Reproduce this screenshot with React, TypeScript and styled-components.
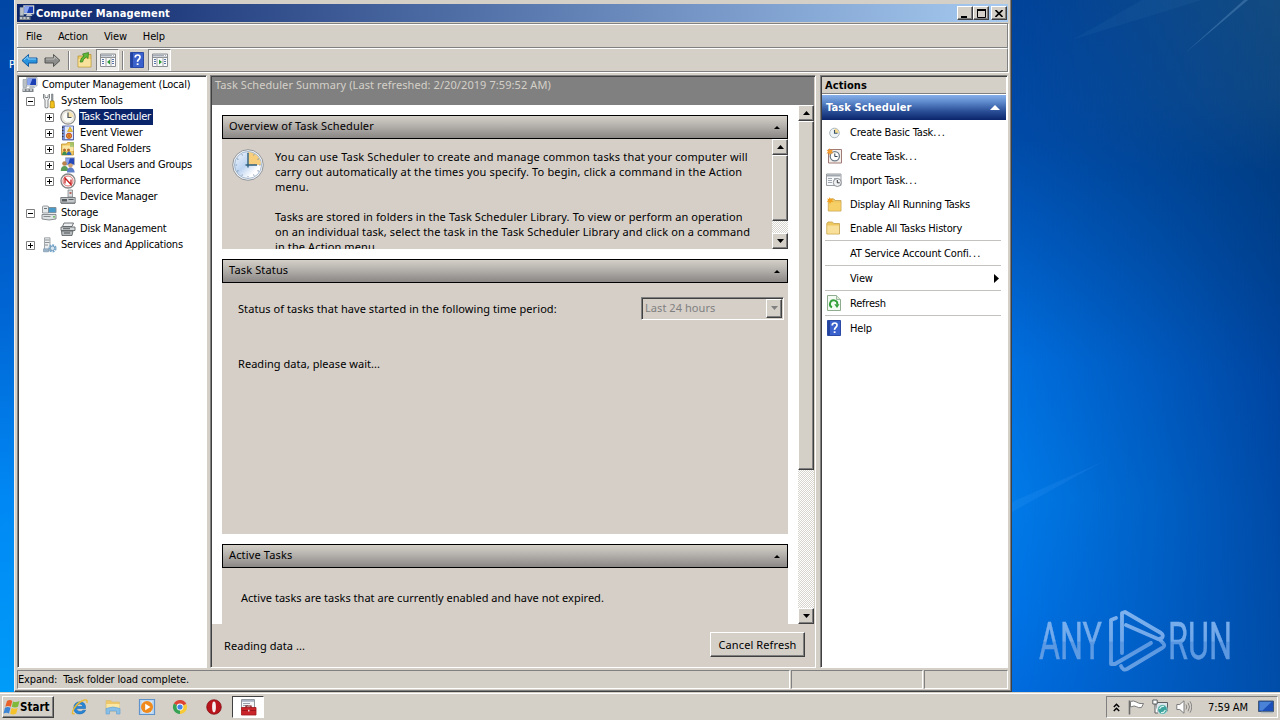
import React, { ReactNode } from "react";
import styled, { createGlobalStyle, css } from "styled-components";

const UI_FONT = `"DejaVu Sans Condensed", "DejaVu Sans", sans-serif`;
const CONTENT_FONT = `"Noto Sans", "Open Sans", sans-serif`;

const FACE = "#d4d0c8";
const SHADOW = "#808080";
const DARK = "#404040";

const raised = css`
    background: ${FACE};
    border: 1px solid;
    border-color: #ffffff ${DARK} ${DARK} #ffffff;
    box-shadow: inset -1px -1px 0 ${SHADOW};
`;

const GlobalStyle = createGlobalStyle`
    * {
        box-sizing: border-box;
    }
    body {
        margin: 0;
        overflow: hidden;
        font-family: ${UI_FONT};
        font-size: 11px;
        color: #000000;
    }
    svg {
        display: block;
        flex: none;
    }
`;

const Screen = styled.div`
    width: 1280px;
    height: 720px;
    display: flex;
    flex-direction: column;
    overflow: hidden;
`;

const Desktop = styled.div`
    position: relative;
    flex: 1;
    min-height: 0;
    padding-left: 14px;
    background: linear-gradient(180deg, #00439a 0%, #004ba8 20%, #005dc4 37%, #006fdf 52%, #007be9 72%, #0074e6 88%, #006cdf 100%);
    &:before {
        content: "";
        position: absolute;
        inset: 0;
        background: linear-gradient(180deg, #134b80 0%, #0d4682 14%, #003d84 25%, #003f8c 36%, #0045a0 55%, #004aa6 75%, #004da8 100%);
        mask-image: linear-gradient(90deg, transparent 1012px, rgba(0, 0, 0, 0.5) 1150px, #000000 1280px);
    }
    &:after {
        content: "";
        position: absolute;
        left: 0;
        top: 0;
        width: 14px;
        height: 100%;
        background: linear-gradient(180deg, #0046a4 0%, #004cb4 14%, #0066d4 45%, #0088f4 72%, #009cf9 100%);
    }
`;

const Rays = styled.svg`
    position: absolute;
    left: 1012px;
    top: 0;
`;

const Watermark = styled.svg`
    position: absolute;
    left: 1036px;
    top: 608px;
    opacity: 0.9;
`;

const IconCaption = styled.span<{ $top: number }>`
    position: absolute;
    z-index: 1;
    left: 9px;
    top: ${props => props.$top}px;
    width: 5px;
    overflow: hidden;
    color: #ffffff;
    line-height: 12px;
`;

const Window = styled.div`
    position: relative;
    z-index: 2;
    width: 998px;
    height: 692px;
    padding: 4px 3px 2px 2px;
    display: flex;
    flex-direction: column;
    background: ${FACE};
    border-left: 1px solid #f2f0ec;
    border-right: 1px solid ${DARK};
    border-bottom: 1px solid ${DARK};
    box-shadow: inset -1px -1px 0 ${SHADOW};
`;

const TitleBar = styled.div`
    height: 18px;
    padding: 0 1px 0 2px;
    display: flex;
    align-items: center;
    gap: 1px;
    background: linear-gradient(90deg, #0a246a, #a6caf0);
`;

const Title = styled.h1`
    flex: 1;
    margin: 0;
    font-size: 11px;
    font-weight: 700;
    letter-spacing: 0.15px;
    color: #ffffff;
`;

const CaptionButton = styled.div<{ $gap?: boolean }>`
    ${raised}
    width: 16px;
    height: 14px;
    margin-left: ${props => props.$gap ? 1 : -1}px;
    display: flex;
    align-items: center;
    justify-content: center;
`;

const Band = styled.div<{ $first?: boolean }>`
    height: ${props => props.$first ? 25 : 24}px;
    margin-top: ${props => props.$first ? 1 : 0}px;
    padding-left: 1px;
    display: flex;
    align-items: center;
    border: 1px solid ${SHADOW};
    border-left: 0;
    border-top-color: ${props => props.$first ? SHADOW : "#ffffff"};
    box-shadow: inset 1px 0 0 #ffffff, inset 0 1px 0 ${props => props.$first ? "#ffffff" : "transparent"}, 1px 1px 0 #ffffff;
`;

const MenuItem = styled.span`
    margin-left: 8px;
    margin-right: 8px;
    padding-top: 1px;
    letter-spacing: -0.15px;
`;

const ToolButton = styled.div<{ $pressed?: boolean }>`
    width: 23px;
    height: 22px;
    display: flex;
    align-items: center;
    justify-content: center;
    ${props => props.$pressed && css`
        background: #f0eeea;
        border: 1px solid;
        border-color: ${SHADOW} #ffffff #ffffff ${SHADOW};
    `}
`;

const ToolSeparator = styled.div<{ $tight?: boolean }>`
    width: 2px;
    height: 19px;
    margin: ${props => props.$tight ? "0 1px 0 3px" : "0 3px 0 4px"};
    border-left: 1px solid ${SHADOW};
    border-right: 1px solid #ffffff;
`;

const Panes = styled.div`
    flex: 1;
    min-height: 0;
    margin-top: 3px;
    display: flex;
`;

const Pane = styled.div<{ $width: number; $gap?: number; $fill?: string }>`
    width: ${props => props.$width}px;
    margin-right: ${props => props.$gap || 0}px;
    flex: none;
    display: flex;
    flex-direction: column;
    overflow: hidden;
    background: ${props => props.$fill || "#ffffff"};
    border: 1px solid;
    border-color: ${SHADOW} #ffffff #ffffff ${SHADOW};
    box-shadow: inset 1px 1px 0 ${DARK};
    padding: 1px 1px 0 1px;
`;

const TreeRow = styled.div<{ $level: number }>`
    height: 16px;
    padding-left: ${props => [3, 7, 26][props.$level]}px;
    display: flex;
    align-items: center;
`;

const Expander = styled.span<{ $empty?: boolean }>`
    width: 9px;
    height: 9px;
    margin-right: 6px;
    flex: none;
    visibility: ${props => props.$empty ? "hidden" : "visible"};
`;

const TreeLabel = styled.span<{ $selected?: boolean }>`
    height: 16px;
    margin-left: 3px;
    padding: 0 2px 0 1px;
    line-height: 16px;
    white-space: nowrap;
    letter-spacing: -0.21px;
    ${props => props.$selected && css`
        color: #ffffff;
        background: #0a246a;
    `}
`;

const SummaryHeader = styled.div`
    height: 28px;
    flex: none;
    padding: 0 3px;
    font-family: ${CONTENT_FONT};
    letter-spacing: 0.08px;
    line-height: 16px;
    color: ${FACE};
    background: ${SHADOW};
`;

const ScrollArea = styled.div`
    height: 519px;
    flex: none;
    display: flex;
    overflow: hidden;
    background: #ffffff;
`;

const Sections = styled.div`
    flex: 1;
    padding: 10px 10px 0 10px;
    font-family: ${CONTENT_FONT};
`;

const Section = styled.section<{ $height: number }>`
    height: ${props => props.$height}px;
    margin-bottom: 10px;
    display: flex;
    flex-direction: column;
    background: #d5cfc8;
`;

const SectionHeader = styled.header`
    height: 24px;
    flex: none;
    padding: 0 7px 0 6px;
    display: flex;
    align-items: center;
    justify-content: space-between;
    letter-spacing: 0.15px;
    line-height: 20px;
    border: 1px solid #000000;
    background: linear-gradient(180deg, #d4d0c8 0%, #b4b0ac 45%, #8b8785 100%);
    span {
        padding-bottom: 2px;
    }
`;

const Overview = styled.div`
    flex: 1;
    min-height: 0;
    display: flex;
    overflow: hidden;
`;

const OverviewIcon = styled.div`
    width: 53px;
    padding: 10px 0 0 10px;
`;

const OverviewText = styled.div`
    flex: 1;
    padding-top: 10px;
`;

const Paragraph = styled.p<{ $spacing: number }>`
    margin: 0 0 15px;
    line-height: 15px;
    white-space: pre;
    letter-spacing: ${props => props.$spacing}px;
`;

const ScrollBar = styled.div`
    width: 16px;
    flex: none;
    display: flex;
    flex-direction: column;
    background: repeating-conic-gradient(#ffffff 0% 25%, #d8d5ce 0% 50%) 0 0 / 2px 2px;
`;

const ScrollButton = styled.div`
    ${raised}
    height: 16px;
    flex: none;
    display: flex;
    align-items: center;
    justify-content: center;
`;

const Thumb = styled.div<{ $height: number }>`
    ${raised}
    height: ${props => props.$height}px;
    margin-bottom: auto;
`;

const StatusBody = styled.div`
    padding: 13px 4px 0 16px;
    display: flex;
    flex-direction: column;
`;

const PeriodRow = styled.div`
    height: 24px;
    display: flex;
    align-items: center;
    justify-content: space-between;
    letter-spacing: 0.065px;
`;

const Select = styled.div`
    width: 143px;
    height: 23px;
    padding: 1px 1px 1px 3px;
    display: flex;
    align-items: center;
    justify-content: space-between;
    color: ${SHADOW};
    border: 1px solid;
    border-color: ${SHADOW} #ffffff #ffffff ${SHADOW};
    box-shadow: inset 1px 1px 0 ${DARK};
    span {
        padding-bottom: 1px;
    }
`;

const DropButton = styled.div`
    ${raised}
    width: 16px;
    height: 19px;
    display: flex;
    align-items: center;
    justify-content: center;
`;

const Waiting = styled.div`
    margin-top: 36px;
    letter-spacing: 0.04px;
    line-height: 16px;
`;

const ActiveBody = styled.div`
    padding: 22px 0 0 19px;
    line-height: 16px;
    letter-spacing: 0.02px;
`;

const SummaryFooter = styled.div`
    flex: 1;
    padding: 0 9px 0 12px;
    display: flex;
    align-items: center;
    justify-content: space-between;
    font-family: ${CONTENT_FONT};
    letter-spacing: 0.06px;
    background: #d5cfc8;
`;

const PushButton = styled.button`
    ${raised}
    width: 95px;
    height: 25px;
    margin-bottom: 2px;
    padding: 0 0 1px;
    font-family: ${CONTENT_FONT};
    font-size: 11px;
    letter-spacing: 0.1px;
    color: #000000;
`;

const ActionsTitle = styled.div`
    height: 17px;
    padding-left: 3px;
    line-height: 17px;
    font-weight: 700;
    letter-spacing: 0.08px;
    background: ${FACE};
    border-bottom: 1px solid ${SHADOW};
`;

const ActionsGroup = styled.div`
    height: 25px;
    margin-top: 1px;
    padding: 0 6px 0 4px;
    display: flex;
    align-items: center;
    justify-content: space-between;
    font-weight: 700;
    letter-spacing: 0.13px;
    color: #ffffff;
    background: linear-gradient(180deg, #86b0ea 0%, #5b86c9 30%, #2a4f97 65%, #0a246a 100%);
`;

const ActionRow = styled.div`
    height: 24px;
    padding: 0 7px 0 4px;
    display: flex;
    align-items: center;
    letter-spacing: -0.2px;
    > svg {
        margin-left: auto;
    }
`;

const ActionIcon = styled.span`
    width: 24px;
    height: 16px;
`;

const Dots = styled.span`
    letter-spacing: 1.2px;
`;

const ActionSeparator = styled.div`
    height: 1px;
    margin: 0 5px 0 3px;
    background: #c4c2be;
`;

const StatusBar = styled.div`
    height: 19px;
    margin-top: 2px;
    display: flex;
    gap: 1px;
`;

const StatusCell = styled.div<{ $width: number }>`
    width: ${props => props.$width}px;
    line-height: 17px;
    white-space: pre;
    letter-spacing: -0.16px;
    border: 1px solid;
    border-color: ${SHADOW} #ffffff #ffffff ${SHADOW};
`;

const Taskbar = styled.div`
    height: 28px;
    flex: none;
    padding: 4px 2px 2px 2px;
    display: flex;
    align-items: stretch;
    background: ${FACE};
    box-shadow: inset 0 1px 0 ${FACE}, inset 0 2px 0 #ffffff;
`;

const StartButton = styled.div`
    ${raised}
    width: 52px;
    display: flex;
    align-items: center;
    font-size: 11.5px;
    font-weight: 700;
`;

const QuickLaunch = styled.div`
    margin-left: 9px;
    display: flex;
    align-items: center;
`;

const QuickItem = styled.div<{ $active?: boolean }>`
    width: 33.5px;
    height: 22px;
    display: flex;
    align-items: center;
    justify-content: center;
    ${props => props.$active && css`
        width: 32px;
        margin-left: 1px;
        background: #ffffff;
        border: 1px solid;
        border-color: ${DARK} #ffffff #ffffff ${DARK};
    `}
`;

const Tray = styled.div`
    width: 172px;
    margin-left: auto;
    padding: 0 1px 0 6px;
    display: flex;
    align-items: center;
    gap: 8px;
    border: 1px solid;
    border-color: ${SHADOW} #ffffff #ffffff ${SHADOW};
`;

const Clock = styled.span`
    margin: 0 2px 0 8px;
    letter-spacing: -0.1px;
    white-space: nowrap;
`;

interface IconProps {
    size?: number;
    children?: ReactNode;
}

const Icon16 = ({ size = 16, children }: IconProps) => (
    <svg width={size} height={size} viewBox="0 0 16 16">{children}</svg>
);

const Triangle = ({ dir, width, color = "#000000" }: { dir: "up" | "down" | "right"; width: number; color?: string }) => {
    const half = Math.ceil(width / 2);
    if (dir === "right") {
        return <svg width={half} height={width}><path d={`M0 0L${half} ${width / 2}L0 ${width}z`} fill={color} /></svg>;
    }
    const d = dir === "up" ? `M0 ${half}L${width / 2} 0L${width} ${half}z` : `M0 0L${width / 2} ${half}L${width} 0z`;
    return <svg width={width} height={half}><path d={d} fill={color} /></svg>;
};

const ComputerIcon = () => (
    <Icon16>
        <path d="M1 2.500h3.500v8H1z" fill="#b9c0c6" stroke="#8f979d" strokeWidth=".6" />
        <path d="M4.500.5h10.500v8.500H4.500z" fill="#e8ecef" stroke="#9aa2a9" strokeWidth=".7" />
        <path d="M5.500 1.500h8.500V8H5.500z" fill="#1d3fb4" />
        <path d="M5.500 1.500h5L8 8H5.500z" fill="#8aa5f0" />
        <path d="M8 9h4l1.500 2H7z" fill="#b9c0c6" />
        <path d="M.5 11.500h11V15H.5z" fill="#7b8388" />
        <path d="M1 12.300h2v1.500H1zM4.500 12.300h2v1.500h-2zM8 12.300h2v1.500H8z" fill="#d9dde0" />
    </Icon16>
);

const ToolsIcon = () => (
    <Icon16>
        <path d="M2.500 1v4l1.500 2v7.500q1.500 1 3 0V7l1.500-2V1L7 2.500V4.500H4V2.500z" fill="#f1f1f1" stroke="#73787c" strokeWidth=".9" />
        <path d="M10.500 1H12v7h-1.500z" fill="#9aa0a5" stroke="#5f6468" strokeWidth=".5" />
        <path d="M9.500 8H13l.5 6.500q-2.200 1.200-4.500 0z" fill="#f2c21c" stroke="#a87b00" strokeWidth=".7" />
    </Icon16>
);

const ClockIcon = () => (
    <Icon16>
        <circle cx="8" cy="8" r="7.200" fill="#f2f2ee" stroke="#8b8b8b" strokeWidth="1.200" />
        <circle cx="8" cy="8" r="5.500" fill="#fbfbf7" stroke="#d5cfbf" strokeWidth=".7" />
        <path d="M8 8V2.800A5.200 5.200 0 0 1 13.200 8z" fill="#f7e3ae" />
        <path d="M8 3.500V8.500H11.500" fill="none" stroke="#4b5057" strokeWidth="1.200" />
    </Icon16>
);

const BigClockIcon = () => (
    <svg width="32" height="32" viewBox="0 0 32 32">
        <defs>
            <linearGradient id="clockFace" x1="0" y1="0" x2="1" y2="1">
                <stop offset="0" stopColor="#f4f8fd" />
                <stop offset=".45" stopColor="#bcd3f0" />
                <stop offset=".75" stopColor="#ffffff" />
            </linearGradient>
        </defs>
        <circle cx="16" cy="16" r="15.300" fill="#f4f6f8" stroke="#8f9499" strokeWidth="1" />
        <circle cx="16" cy="16" r="13.500" fill="url(#clockFace)" stroke="#8da7c4" strokeWidth=".8" />
        <path d="M16 16V3A13 13 0 0 1 29 16z" fill="#f7cf7c" />
        {Array.from(Array(12).keys()).map(i => (
            <path key={i} d="M16 3.500v1.500" stroke="#8399b2" strokeWidth=".9" transform={`rotate(${i * 30} 16 16)`} />
        ))}
        <path d="M16 4V18.500M13.500 16H25" stroke="#2d5f7f" strokeWidth="1.400" />
    </svg>
);

const EventIcon = () => (
    <Icon16>
        <path d="M2.500 1h11v14h-11z" fill="#7b93d6" stroke="#3d4f93" strokeWidth=".8" />
        <path d="M5 1.500h8V14H5z" fill="#dfe6fa" />
        <path d="M2 2h1.500v1H2zM2 5h1.500v1H2zM2 8h1.500v1H2zM2 11h1.500v1H2z" fill="#3a3a3a" />
        <circle cx="9" cy="10.800" r="2.600" fill="#e0a020" stroke="#c23a22" strokeWidth=".9" />
        <path d="M10 2l2.500 4.500h-5z" fill="#f5c62b" stroke="#b98a00" strokeWidth=".5" />
        <path d="M8.500 9.500h1v2.500h-1z" fill="#c23a22" />
    </Icon16>
);

const SharedIcon = () => (
    <Icon16>
        <path d="M1.500 3h5l1-1.500h6V14h-12z" fill="#f0c75c" stroke="#bf9232" strokeWidth=".8" />
        <path d="M2.500 4.500h11V10h-11z" fill="#fae7a6" />
        <path d="M10 1h4v5h-4z" fill="#8fc26a" opacity=".7" />
        <circle cx="4.500" cy="9" r="1.500" fill="#b96f2a" />
        <circle cx="8.500" cy="9" r="1.500" fill="#b96f2a" />
        <path d="M2 14q.5-3.500 2.500-3.500T7 14z" fill="#3e8f4c" />
        <path d="M6.500 14q.5-3.500 2.500-3.500t2.500 3.500z" fill="#2e63b8" />
    </Icon16>
);

const UsersIcon = () => (
    <Icon16>
        <path d="M5.500.8h9v7h-9z" fill="#2548bb" stroke="#a9b1bd" strokeWidth=".9" />
        <path d="M6 1.300h4L8 7.300H6z" fill="#8ba6ef" />
        <circle cx="4.500" cy="6.500" r="2.300" fill="#b9834c" />
        <path d="M.8 14q0-5 3.700-5t3.700 5z" fill="#5c9c5a" />
        <circle cx="10.500" cy="8.500" r="2.200" fill="#d2a373" />
        <path d="M7 15.500q0-5 3.500-5t4.200 5z" fill="#5e7fc9" />
    </Icon16>
);

const PerformanceIcon = () => (
    <Icon16>
        <circle cx="8" cy="8" r="7" fill="#fafafa" stroke="#858585" strokeWidth="1.300" />
        <circle cx="8" cy="8" r="5" fill="#ffffff" stroke="#e07070" strokeWidth="1" />
        <path d="M5 10.500V5l6 6.500V6.500" fill="none" stroke="#c81e1e" strokeWidth="1.300" />
    </Icon16>
);

const DeviceIcon = () => (
    <Icon16>
        <path d="M8 1h4.500v7H8z" fill="#d8dcdf" stroke="#72787d" strokeWidth=".7" />
        <path d="M9.500 3h2v2h-2z" fill="#b9695f" />
        <path d="M.8 8.500h14.400V14H.8z" fill="#c3c7ca" stroke="#60666a" strokeWidth=".8" />
        <path d="M2 10h5v2.500H2zM8.500 10h5v1h-5z" fill="#575d61" />
        <path d="M1 14h14v1H1z" fill="#7c8286" />
    </Icon16>
);

const StorageIcon = () => (
    <Icon16>
        <path d="M2.500 1h4q1 0 1 1v6h-6V2q0-1 1-1z" fill="#e6e9ea" stroke="#7d8488" strokeWidth=".8" />
        <path d="M7.500 2.500h7.500v5.200H7.500z" fill="#4a9ac9" stroke="#80898f" strokeWidth=".9" />
        <path d="M3 3.500h3" stroke="#6d7478" />
        <path d="M1 9.500h14V14q-7 2-14 0z" fill="#dfe2e3" stroke="#6f767a" strokeWidth=".8" />
        <path d="M2.500 11.500h7" stroke="#868d91" />
        <circle cx="13" cy="11.800" r=".9" fill="#4eb53c" />
    </Icon16>
);

const DiskIcon = () => (
    <Icon16>
        <path d="M4 2h9.500l-1.500 3.500H2.500z" fill="#eceeef" stroke="#62686c" strokeWidth=".9" />
        <path d="M1 6h14v3.500H1z" fill="#d5d8da" stroke="#53595c" strokeWidth=".8" />
        <path d="M1.500 10H13l-1 4.500H2z" fill="#b8bcbf" stroke="#53595c" strokeWidth=".8" />
        <path d="M3 7.800h7M4 12h6" stroke="#4b5154" strokeWidth="1.100" />
    </Icon16>
);

const ServicesIcon = () => (
    <Icon16>
        <path d="M3.500.8h5.500v12.500H3.500z" fill="#eceeef" stroke="#8c9296" strokeWidth=".8" />
        <path d="M4 3h4.500M4 5.500h4.500M4 8h3" stroke="#81878b" strokeWidth=".9" />
        <circle cx="11.500" cy="11.300" r="3" fill="none" stroke="#76a6c9" strokeWidth="2.300" strokeDasharray="1.800 .9" />
        <circle cx="11.500" cy="11.300" r="2.200" fill="#d7e6f1" stroke="#6391b3" strokeWidth=".8" />
        <path d="M2.500 11.800h5v3h-5z" fill="#9bb4c9" stroke="#7893a9" strokeWidth=".6" />
    </Icon16>
);

const ArrowIcon = ({ back }: { back?: boolean }) => (
    <svg width="17" height="16" viewBox="0 0 17 16">
        <path
            d={back ? "M1 8.500L7.500 2.500v3.500H16v5H7.500V14.500z" : "M16 8.500L9.500 2.500v3.500H1v5h8.500V14.500z"}
            fill={back ? "#2a93dd" : "#8d8d8b"}
            stroke={back ? "#145b9e" : "#555553"}
            strokeWidth="1"
            strokeLinejoin="round"
        />
        <path d={back ? "M3 8L7 4.500v2.500h8" : "M2 7h8.300V4.500l3 3"} fill="none" stroke={back ? "#8fd3fa" : "#bdbdbb"} strokeWidth="1" />
    </svg>
);

const UpFolderIcon = () => (
    <Icon16>
        <path d="M1 4h5l1.500-1.500H14V15H1z" fill="#f1d06c" stroke="#b99336" strokeWidth=".8" />
        <path d="M1.500 7h12v7.500h-12z" fill="#f8e19a" />
        <path d="M3 10q1-5 4-6L5.500 2l6-1.500-.5 6-1.800-1.500Q6 7 5.500 10z" fill="#5fb83a" stroke="#2f7d18" strokeWidth=".7" />
    </Icon16>
);

const PanelIcon = ({ right }: { right?: boolean }) => (
    <Icon16>
        <path d="M.5 2h15v12.500H.5z" fill="#fafafa" stroke="#8a8e92" strokeWidth="1" />
        <path d="M1 2.500h14v2H1z" fill="#a6adb6" />
        <path d="M12 3h1v1h-1zM14 3h1v1h-1z" fill="#ffffff" />
        <path d="M1 5.500h14" stroke="#8a8e92" />
        <path d={right ? "M11 5v9.500M5 5v9.500" : "M6 5v9.500M11 5v9.500"} stroke="#a0a4a8" />
        <path d="M2 7.500h2M2 9.500h2M2 11.500h2M12 7.500h2M12 9.500h2M12 11.500h2" stroke="#5a76a8" />
        <path d={right ? "M7 7.500v5L10 10z" : "M10 7.500v5L7 10z"} fill="#2f9b34" />
    </Icon16>
);

const HelpIcon = () => (
    <Icon16>
        <path d="M1.500.5h13v15h-13z" fill="#3b62cc" stroke="#2a4aa6" strokeWidth="1" />
        <path d="M2 1h2v14H2z" fill="#24439f" />
        <path d="M6.200 5.500Q6.200 3 8.700 3T11 5.200Q11 6.500 9.700 7.500T8.600 9.800" fill="none" stroke="#ffffff" strokeWidth="1.700" />
        <path d="M7.700 11.300h1.800V13H7.700z" fill="#ffffff" />
    </Icon16>
);

const SmallClockIcon = () => (
    <Icon16>
        <circle cx="8.500" cy="9" r="4.800" fill="#eef3f6" stroke="#a9b7c0" strokeWidth="1" />
        <path d="M8.500 9V4.700a4.300 4.300 0 0 1 4.300 4.300z" fill="#f5d98e" />
        <path d="M8.500 6v3.300h3" fill="none" stroke="#36546b" strokeWidth="1.100" />
    </Icon16>
);

const CreateTaskIcon = () => (
    <Icon16>
        <path d="M2.500 1.500h13v13.500h-13z" fill="#f4efec" stroke="#a07a74" strokeWidth="1" />
        <circle cx="8.800" cy="8.300" r="4.600" fill="#ffffff" stroke="#6d7c86" strokeWidth="1.300" />
        <path d="M8.800 5.500v3h2.700" fill="none" stroke="#33424c" strokeWidth="1" />
        <path d="M3.500 0l1 2.300L7 1.500 5.800 3.800 7.500 5.500 5 5.300 3.800 7.500 3 5.200.3 5.500 2 3.700.5 1.700l2.300.5z" fill="#f29a2e" />
    </Icon16>
);

const ImportIcon = () => (
    <Icon16>
        <path d="M.5 2h14.500v11.500H.5z" fill="#f7f8f9" stroke="#9a9ea2" strokeWidth="1" />
        <path d="M1 2.500h13.500v2H1z" fill="#a0a7ae" />
        <path d="M2 6.500h4M2 8.500h4M2 10.500h4M8 6.500h4" stroke="#a0a7ae" />
        <circle cx="11.300" cy="10.500" r="4" fill="#f1f2f3" stroke="#8b9095" strokeWidth="1" />
        <path d="M11.300 8v2.800h2.400" fill="none" stroke="#34383c" />
    </Icon16>
);

const FolderIcon = ({ spark }: { spark?: boolean }) => (
    <Icon16>
        <g transform={spark ? "translate(1.500 1)" : ""}>
            <path d="M.8 3.500L2 2h4.500l1 1.500h6V14H.8z" fill="#eec75e" stroke="#c9a85a" strokeWidth=".9" />
            <path d="M1.300 5.500h11.700v8H1.300z" fill={spark ? "#f6cf66" : "#f8e09a"} />
        </g>
        {spark && <path d="M3.500 1l1 2 2.500-.7-1 2.200L7.500 6 5 6l-1 2.200-.8-2.400L.8 6l1.500-1.700L1 2.500l2 .5z" fill="#f2a01e" />}
    </Icon16>
);

const RefreshIcon = () => (
    <Icon16>
        <path d="M1.500.5h9l4 4v11h-13z" fill="#f4fbf3" stroke="#8fac8e" strokeWidth="1" />
        <path d="M10.500.5v4h4" fill="#d8ead6" stroke="#8fac8e" strokeWidth=".8" />
        <path d="M6 12.300A3.700 3.700 0 1 1 11.300 9.500" fill="none" stroke="#33a03a" strokeWidth="1.900" />
        <path d="M8.300 9.300h5.200L11 13z" fill="#33a03a" />
    </Icon16>
);

const WindowsIcon = () => (
    <svg width="17" height="17" viewBox="0 0 17 17">
        <path d="M4 2q3-2 5.300 0L7.800 7.700q-2.700-1.500-5.500 0z" fill="#e8602a" />
        <path d="M10 2.500q3 1.300 6.500-.5l-1.500 5.800q-3 1.500-6.200 0z" fill="#7fb93a" />
        <path d="M2 8.800q2.700-1.500 5.500 0L6 14.500Q3.500 13 .5 14.500z" fill="#3c84d6" />
        <path d="M8.500 9q3 1.300 6.200 0L13.200 14.500q-3 1.700-6 .2z" fill="#f6c22c" />
    </svg>
);

const IeIcon = () => (
    <svg width="18" height="18" viewBox="0 0 18 18">
        <path d="M14.500 10.500H5.500Q6 13.500 9 13.500q2 0 3-1.300h2.700Q13 16 9 16q-6 0-6.300-6Q3 4 9 3.800q6 .2 5.500 6.700zM5.700 8.500h6.200Q11.500 6 8.900 6 6.300 6 5.700 8.500z" fill="#2686d8" stroke="#155fa8" strokeWidth=".5" />
        <path d="M3.500 15.500Q0 17 2 12.500 5 6 11 3q6-3 5 2" fill="none" stroke="#e9b931" strokeWidth="1.400" />
    </svg>
);

const ExplorerIcon = () => (
    <svg width="18" height="18" viewBox="0 0 18 18">
        <path d="M2 5V2.500h5L8 4h7.500v9H2z" fill="#eec868" stroke="#d9bd7a" strokeWidth=".7" />
        <path d="M2.500 6h13v6h-13z" fill="#fae7a4" />
        <path d="M2 10.500q7-3 14 0V16h-3.500v-3h-7v3H2z" fill="#86bfe8" stroke="#6ba4d0" strokeWidth=".7" />
    </svg>
);

const MediaIcon = () => (
    <svg width="18" height="18" viewBox="0 0 18 18">
        <path d="M1.500 1.500h15v15h-15z" fill="#bcd8f2" stroke="#5f93c9" strokeWidth="1.200" />
        <path d="M4 3.500h10v11H4z" fill="#e6f0fa" />
        <circle cx="9" cy="9" r="6" fill="#f08a1c" />
        <path d="M7.200 5.800v6.400L12.500 9z" fill="#ffffff" />
    </svg>
);

const ChromeIcon = () => (
    <Icon16>
        <path d="M8 8L1.900 4.500A7 7 0 0 1 14.300 5z" fill="#dd4433" />
        <path d="M8 8l6.300-3A7 7 0 0 1 8 15z" fill="#f7cb36" />
        <path d="M8 8v7A7 7 0 0 1 1.900 4.500z" fill="#36a254" />
        <circle cx="8" cy="8" r="3.400" fill="#ffffff" />
        <circle cx="8" cy="8" r="2.600" fill="#4286e8" />
    </Icon16>
);

const OperaIcon = () => (
    <Icon16>
        <circle cx="8" cy="8" r="7.300" fill="#b9141c" stroke="#80090f" strokeWidth=".7" />
        <ellipse cx="8" cy="8" rx="1.900" ry="5.400" fill="#f6eeee" />
    </Icon16>
);

const ToolboxIcon = () => (
    <svg width="18" height="18" viewBox="0 0 18 18">
        <path d="M2.500 1.500h13v9h-13z" fill="#f3f5f7" stroke="#9298a0" strokeWidth="1" />
        <path d="M3 2h12v1.800H3z" fill="#aab4c4" />
        <path d="M4 5.500h7M4 7.500h5" stroke="#9aa2ad" />
        <path d="M7 10V8h5v2" fill="none" stroke="#7d1014" strokeWidth="1.200" />
        <path d="M2.500 9.500h14.500V17H2.500z" fill="#c9242a" stroke="#a0161b" strokeWidth=".8" />
        <path d="M3 12.500h14" stroke="#9c161b" />
        <path d="M9 11.800h1.500v1.800H9z" fill="#f1d7d7" />
    </svg>
);

const ChevronsIcon = () => (
    <svg width="7" height="9" viewBox="0 0 7 9">
        <path d="M.8 4L3.500 1.300 6.200 4M.8 8l2.700-2.700L6.200 8" fill="none" stroke="#000000" strokeWidth="1.500" />
    </svg>
);

const FlagIcon = () => (
    <Icon16>
        <path d="M1.500 1.500v14" stroke="#6d6d6d" strokeWidth="1.600" />
        <path d="M2.500 2.500q3-1.200 5.500.3T12 4.500h3.500l-2 4q-3 .8-5-.8T2.500 8z" fill="#ffffff" stroke="#7d7d7d" strokeWidth="1" />
    </Icon16>
);

const NetworkIcon = () => (
    <Icon16>
        <path d="M4 3.500h11.500v8.500H4z" fill="#dce6ea" stroke="#5b5f62" strokeWidth="1" />
        <path d="M.8 1h4.400v4H.8zM3 5v9h3" fill="#ffffff" stroke="#5b5f62" strokeWidth="1" />
        <circle cx="10.500" cy="10.500" r="4.800" fill="#3fa39d" stroke="#e9f4f3" strokeWidth=".6" />
        <path d="M7.500 10q1.500-3.500 4.500-2.500M13.300 11q-1.500 3.300-4.300 2.500" fill="none" stroke="#d8f3ef" strokeWidth="1.200" />
    </Icon16>
);

const VolumeIcon = () => (
    <Icon16>
        <path d="M.8 5.500h3L8 1.800v12.500L3.800 10.500h-3z" fill="#ffffff" stroke="#7d7d7d" strokeWidth="1" />
        <path d="M10 5.500q1.500 2.500 0 5M12 3.700q3 4.300 0 8.600M14 2.300q3.500 5.700 0 11.400" fill="none" stroke="#7d7d7d" strokeWidth=".9" />
    </Icon16>
);

const ShowDesktopIcon = () => (
    <Icon16>
        <path d="M.5 2h15v10.500H.5z" fill="#1c50b8" stroke="#3e5876" strokeWidth="1" />
        <path d="M1.500 3h12l-9 8.500h-3z" fill="#4a82d8" />
        <path d="M3 13.500h12" stroke="#aeb6c0" strokeWidth="1.500" />
    </Icon16>
);

interface TreeNode {
    label: string;
    level: number;
    icon: ReactNode;
    state?: "open" | "closed";
    selected?: boolean;
}

const tree: TreeNode[] = [
    { label: "Computer Management (Local)", level: 0, icon: <ComputerIcon /> },
    { label: "System Tools", level: 1, icon: <ToolsIcon />, state: "open" },
    { label: "Task Scheduler", level: 2, icon: <ClockIcon />, state: "closed", selected: true },
    { label: "Event Viewer", level: 2, icon: <EventIcon />, state: "closed" },
    { label: "Shared Folders", level: 2, icon: <SharedIcon />, state: "closed" },
    { label: "Local Users and Groups", level: 2, icon: <UsersIcon />, state: "closed" },
    { label: "Performance", level: 2, icon: <PerformanceIcon />, state: "closed" },
    { label: "Device Manager", level: 2, icon: <DeviceIcon /> },
    { label: "Storage", level: 1, icon: <StorageIcon />, state: "open" },
    { label: "Disk Management", level: 2, icon: <DiskIcon /> },
    { label: "Services and Applications", level: 1, icon: <ServicesIcon />, state: "closed" },
];

interface ActionItem {
    label: string;
    icon?: ReactNode;
    dots?: boolean;
    submenu?: boolean;
    separator?: boolean;
}

const actions: ActionItem[] = [
    { label: "Create Basic Task", icon: <SmallClockIcon />, dots: true },
    { label: "Create Task", icon: <CreateTaskIcon />, dots: true },
    { label: "Import Task", icon: <ImportIcon />, dots: true },
    { label: "Display All Running Tasks", icon: <FolderIcon spark /> },
    { label: "Enable All Tasks History", icon: <FolderIcon /> },
    { label: "AT Service Account Confi", dots: true, separator: true },
    { label: "View", submenu: true, separator: true },
    { label: "Refresh", icon: <RefreshIcon />, separator: true },
    { label: "Help", icon: <HelpIcon />, separator: true },
];

const TreeItem = ({ label, level, icon, state, selected }: TreeNode) => (
    <TreeRow $level={level}>
        {level > 0 && (
            <Expander $empty={!state}>
                <svg width="9" height="9">
                    <path d="M.5.5h8v8h-8z" fill="#ffffff" stroke="#808080" />
                    <path d={state === "closed" ? "M2 4.500h5M4.500 2v5" : "M2 4.500h5"} stroke="#000000" />
                </svg>
            </Expander>
        )}
        {icon}
        <TreeLabel $selected={selected}>{label}</TreeLabel>
    </TreeRow>
);

const CollapsibleSection = ({ title, height, children }: { title: string; height: number; children: ReactNode }) => (
    <Section $height={height}>
        <SectionHeader>
            <span>{title}</span>
            <Triangle dir="up" width={6} />
        </SectionHeader>
        {children}
    </Section>
);

const VerticalScroll = ({ thumb }: { thumb: number }) => (
    <ScrollBar>
        <ScrollButton><Triangle dir="up" width={7} /></ScrollButton>
        <Thumb $height={thumb} />
        <ScrollButton><Triangle dir="down" width={7} /></ScrollButton>
    </ScrollBar>
);

const AnyRunMark = () => (
    <Watermark width="220" height="72" viewBox="0 0 220 72">
        <defs>
            <linearGradient id="mark" x1="0" y1="0" x2="0" y2="66" gradientUnits="userSpaceOnUse">
                <stop offset="0" stopColor="#8dbcf2" />
                <stop offset=".5" stopColor="#7db0ee" />
                <stop offset=".52" stopColor="#639de4" />
                <stop offset="1" stopColor="#72a8e8" />
            </linearGradient>
        </defs>
        <g fill="url(#mark)" stroke="url(#mark)" strokeWidth=".5" fontFamily="Roboto, sans-serif" fontSize="52" fontWeight="400">
            <text x="3" y="51" textLength="63" lengthAdjust="spacingAndGlyphs">ANY</text>
            <text x="132" y="51" textLength="64" lengthAdjust="spacingAndGlyphs">RUN</text>
        </g>
        <g fill="none" stroke="url(#mark)" strokeWidth="3.800" strokeLinejoin="round" strokeLinecap="round">
            <path d="M80 10l-5 2v44l4 0 36-21" />
            <path d="M86 45V5l3-1 36 21q3 2 1 5l-4 1L90 17" />
            <path d="M85 58q2 5 6 3l35-21q4-2 1-5l-4-4" />
        </g>
    </Watermark>
);

const App = () => (
    <>
        <GlobalStyle />
        <Screen>
            <Desktop>
                <Rays width="268" height="692" viewBox="0 0 268 692">
                    <path d="M172 54L232 0h4z" fill="#4f86b8" opacity=".5" />
                    <path d="M60 40L130 0h60z" fill="#3a78b8" opacity=".12" />
                    <path d="M0 502l90-40-90 50z" fill="#4aa4f5" opacity=".15" />
                </Rays>
                <AnyRunMark />
                <IconCaption $top={59}>P</IconCaption>
                <Window>
                    <TitleBar>
                        <ComputerIcon />
                        <Title>Computer Management</Title>
                        <CaptionButton>
                            <svg width="10" height="9"><path d="M1 7h6v2H1z" /></svg>
                        </CaptionButton>
                        <CaptionButton>
                            <svg width="9" height="9"><path d="M.5 1h8v7.500h-8z" fill="none" stroke="#000000" /><path d="M0 0h9v2H0z" /></svg>
                        </CaptionButton>
                        <CaptionButton $gap>
                            <svg width="8" height="7"><path d="M.5 0l7 7M7.500 0l-7 7" stroke="#000000" strokeWidth="1.600" /></svg>
                        </CaptionButton>
                    </TitleBar>
                    <Band $first>
                        {["File", "Action", "View", "Help"].map(item => <MenuItem key={item}>{item}</MenuItem>)}
                    </Band>
                    <Band>
                        <ToolButton><ArrowIcon back /></ToolButton>
                        <ToolButton><ArrowIcon /></ToolButton>
                        <ToolSeparator />
                        <ToolButton><UpFolderIcon /></ToolButton>
                        <ToolButton $pressed><PanelIcon /></ToolButton>
                        <ToolSeparator $tight />
                        <ToolButton><HelpIcon /></ToolButton>
                        <ToolButton $pressed><PanelIcon right /></ToolButton>
                    </Band>
                    <Panes>
                        <Pane $width={190} $gap={3}>
                            {tree.map(node => <TreeItem key={node.label} {...node} />)}
                        </Pane>
                        <Pane $width={606} $gap={4} $fill="#d5cfc8">
                            <SummaryHeader>Task Scheduler Summary (Last refreshed: 2/20/2019 7:59:52 AM)</SummaryHeader>
                            <ScrollArea>
                                <Sections>
                                    <CollapsibleSection title="Overview of Task Scheduler" height={134}>
                                        <Overview>
                                            <OverviewIcon><BigClockIcon /></OverviewIcon>
                                            <OverviewText>
                                                <Paragraph $spacing={0.16}>{`You can use Task Scheduler to create and manage common tasks that your computer will
carry out automatically at the times you specify. To begin, click a command in the Action
menu.`}</Paragraph>
                                                <Paragraph $spacing={0.11}>{`Tasks are stored in folders in the Task Scheduler Library. To view or perform an operation
on an individual task, select the task in the Task Scheduler Library and click on a command
in the Action menu.`}</Paragraph>
                                            </OverviewText>
                                            <VerticalScroll thumb={66} />
                                        </Overview>
                                    </CollapsibleSection>
                                    <CollapsibleSection title="Task Status" height={275}>
                                        <StatusBody>
                                            <PeriodRow>
                                                Status of tasks that have started in the following time period:
                                                <Select>
                                                    <span>Last 24 hours</span>
                                                    <DropButton><Triangle dir="down" width={7} color="#808080" /></DropButton>
                                                </Select>
                                            </PeriodRow>
                                            <Waiting>Reading data, please wait...</Waiting>
                                        </StatusBody>
                                    </CollapsibleSection>
                                    <CollapsibleSection title="Active Tasks" height={120}>
                                        <ActiveBody>Active tasks are tasks that are currently enabled and have not expired.</ActiveBody>
                                    </CollapsibleSection>
                                </Sections>
                                <VerticalScroll thumb={349} />
                            </ScrollArea>
                            <SummaryFooter>
                                Reading data ...
                                <PushButton>Cancel Refresh</PushButton>
                            </SummaryFooter>
                        </Pane>
                        <Pane $width={188}>
                            <ActionsTitle>Actions</ActionsTitle>
                            <ActionsGroup>
                                Task Scheduler
                                <Triangle dir="up" width={10} color="#ffffff" />
                            </ActionsGroup>
                            {actions.map(({ label, icon, dots, submenu, separator }) => (
                                <React.Fragment key={label}>
                                    {separator && <ActionSeparator />}
                                    <ActionRow>
                                        <ActionIcon>{icon}</ActionIcon>
                                        <span>{label}{dots && <Dots>...</Dots>}</span>
                                        {submenu && <Triangle dir="right" width={9} />}
                                    </ActionRow>
                                </React.Fragment>
                            ))}
                        </Pane>
                    </Panes>
                    <StatusBar>
                        <StatusCell $width={773}>Expand:  Task folder load complete.</StatusCell>
                        <StatusCell $width={132}></StatusCell>
                        <StatusCell $width={84}></StatusCell>
                    </StatusBar>
                </Window>
            </Desktop>
            <Taskbar>
                <StartButton><WindowsIcon />Start</StartButton>
                <QuickLaunch>
                    <QuickItem><IeIcon /></QuickItem>
                    <QuickItem><ExplorerIcon /></QuickItem>
                    <QuickItem><MediaIcon /></QuickItem>
                    <QuickItem><ChromeIcon /></QuickItem>
                    <QuickItem><OperaIcon /></QuickItem>
                    <QuickItem $active><ToolboxIcon /></QuickItem>
                </QuickLaunch>
                <Tray>
                    <ChevronsIcon />
                    <FlagIcon />
                    <NetworkIcon />
                    <VolumeIcon />
                    <Clock>7:59 AM</Clock>
                    <ShowDesktopIcon />
                </Tray>
            </Taskbar>
        </Screen>
    </>
);

export default App;
